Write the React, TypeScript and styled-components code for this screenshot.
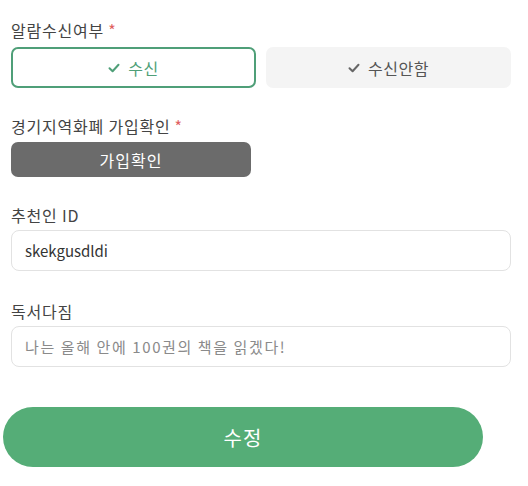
import styled, { createGlobalStyle } from 'styled-components';

const GlobalStyle = createGlobalStyle`
  html, body {
    margin: 0;
    padding: 0;
    background: #fff;
  }
  body {
    font-family: "Noto Sans CJK KR", "Noto Sans", sans-serif;
    color: #444;
  }
`;

const Form = styled.div`
  width: 500px;
  padding: 18px 0 0 11px;
  display: flex;
  flex-direction: column;
`;

const Field = styled.div<{ $gap?: number; $after: number }>`
  display: flex;
  flex-direction: column;
  gap: ${(p) => p.$gap ?? 5}px;
  margin-bottom: ${(p) => p.$after}px;
`;

const Label = styled.div`
  font-size: 16px;
  line-height: 24px;
  color: #444;
  letter-spacing: 0.8px;
`;

const Required = styled.span`
  color: #e06060;
  margin-left: 4px;
`;

const ToggleRow = styled.div`
  display: grid;
  grid-template-columns: 1fr 1fr;
  gap: 10px;
`;

const Toggle = styled.button<{ $active?: boolean }>`
  height: 41px;
  box-sizing: border-box;
  border-radius: 7px;
  border: 2px solid ${(p) => (p.$active ? '#4f9f78' : '#f4f4f4')};
  background: ${(p) => (p.$active ? '#fff' : '#f4f4f4')};
  color: ${(p) => (p.$active ? '#4f9f78' : '#555')};
  font-family: inherit;
  font-size: 16px;
  letter-spacing: 0.5px;
  display: flex;
  align-items: center;
  justify-content: center;
  gap: 8px;
  padding: 0;
`;

const Check = ({ color }: { color: string }) => (
  <svg width="12" height="10" viewBox="0 0 12 10">
    <path d="M1.5 5.2 L4.6 8.2 L10.5 1.8" fill="none" stroke={color} strokeWidth="2" strokeLinecap="round" strokeLinejoin="round" />
  </svg>
);

const GrayButton = styled.button`
  width: 240px;
  height: 35px;
  border: none;
  border-radius: 7px;
  background: #6b6b6b;
  color: #fff;
  font-family: inherit;
  font-size: 16px;
  letter-spacing: 1px;
  padding: 0;
`;

const Input = styled.input`
  box-sizing: border-box;
  width: 500px;
  height: 41px;
  border: 1px solid #e2e2e2;
  border-radius: 8px;
  padding: 0 13px;
  font-family: inherit;
  font-size: 15px;
  color: #333;
  outline: none;
  &::placeholder {
    color: #8a8a8a;
    letter-spacing: 1.6px;
  }
`;

const Footer = styled.div`
  margin: 13px 0 0 -8px;
`;

const Submit = styled.button`
  width: 480px;
  height: 60px;
  border: none;
  border-radius: 30px;
  background: #55ad77;
  color: #fff;
  font-family: inherit;
  font-size: 20px;
  letter-spacing: 1px;
  padding: 0;
`;

export default function App() {
  return (
    <>
      <GlobalStyle />
      <Form>
        <Field $after={26}>
          <Label>
            알람수신여부<Required>*</Required>
          </Label>
          <ToggleRow>
            <Toggle $active>
              <Check color="#4f9f78" />
              수신
            </Toggle>
            <Toggle>
              <Check color="#666" />
              수신안함
            </Toggle>
          </ToggleRow>
        </Field>
        <Field $gap={4} $after={26}>
          <Label>
            경기지역화폐 가입확인<Required>*</Required>
          </Label>
          <GrayButton>가입확인</GrayButton>
        </Field>
        <Field $gap={3} $after={28}>
          <Label>추천인 ID</Label>
          <Input defaultValue="skekgusdldi" />
        </Field>
        <Field $gap={3} $after={27}>
          <Label>독서다짐</Label>
          <Input placeholder="나는 올해 안에 100권의 책을 읽겠다!" />
        </Field>
        <Footer>
          <Submit>수정</Submit>
        </Footer>
      </Form>
    </>
  );
}
